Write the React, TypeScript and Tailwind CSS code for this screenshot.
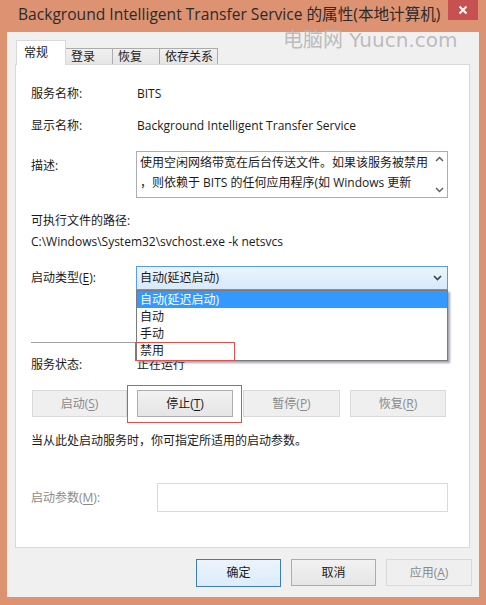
import React from "react";

const F = "font-['Open_Sans','Noto_Sans_CJK_SC',sans-serif]";

function U({ c }: { c: string }) {
  return <span className="underline underline-offset-2">{c}</span>;
}

function Btn({
  children,
  w,
  disabled,
  primary,
}: {
  children: React.ReactNode;
  w: string;
  disabled?: boolean;
  primary?: boolean;
}) {
  const base =
    "h-[27px] flex items-center justify-center text-[12px] border shrink-0 " + w + " ";
  if (disabled)
    return (
      <div className={base + "bg-[#efefef] border-[#d9d9d9] text-[#8a8a8a]"}>{children}</div>
    );
  if (primary)
    return (
      <div className={base + "bg-gradient-to-b from-[#ecf4fc] to-[#dcecfc] border-[#3c7fb1] text-[#1a1a1a]"}>
        {children}
      </div>
    );
  return (
    <div className={base + "bg-gradient-to-b from-[#f2f2f2] to-[#e5e5e5] border-[#acacac] text-[#1a1a1a]"}>
      {children}
    </div>
  );
}

export default function App() {
  return (
    <div className={"relative w-[486px] h-[605px] bg-[#dd9272] flex flex-col overflow-hidden " + F}>
      {/* title bar */}
      <div className="h-[32px] shrink-0 flex items-center pl-[18px] pb-[2px]">
        <span className="text-[15.6px] text-[#2b2b2b] whitespace-nowrap">
          Background Intelligent Transfer Service 的属性(本地计算机)
        </span>
      </div>
      <div className="absolute top-0 right-[8px] w-[30px] h-[20px] bg-[#c75050] flex items-center justify-center">
        <svg width="10" height="10" viewBox="0 0 10 10">
          <path d="M1.5 1.5 L8.5 8.5 M8.5 1.5 L1.5 8.5" stroke="#fff" strokeWidth="2" />
        </svg>
      </div>

      {/* body */}
      <div className="mx-[7px] mb-[8px] flex-1 bg-[#f0f0f0] flex flex-col">
        {/* tabs */}
        <div className="h-[32px] pl-[9px] pt-[8px] flex items-end text-[12px] text-[#1a1a1a]">
          <div className="w-[50px] h-[25px] -mb-px relative z-10 bg-white border-t border-l border-r border-[#d9d9d9] pl-[7px] pt-[3px]">
            常规
          </div>
          <div className="w-[47px] h-[16px] bg-gradient-to-b from-[#f0f0f0] to-[#e5e5e5] border-t border-r border-[#acacac] pl-[5px] leading-[16px]">
            登录
          </div>
          <div className="w-[47px] h-[16px] bg-gradient-to-b from-[#f0f0f0] to-[#e5e5e5] border-t border-r border-[#acacac] pl-[5px] leading-[16px]">
            恢复
          </div>
          <div className="w-[58px] h-[16px] bg-gradient-to-b from-[#f0f0f0] to-[#e5e5e5] border-t border-r border-[#acacac] pl-[5px] leading-[16px]">
            依存关系
          </div>
        </div>

        {/* panel */}
        <div className="ml-[8px] mr-[9px] h-[484px] bg-white border border-[#d9d9d9] pl-[15px] pr-[21px] text-[12px] text-[#1a1a1a] flex flex-col">
          <div className="mt-[21px] h-[16px] flex items-center">
            <div className="w-[106px]">服务名称:</div>
            <div>BITS</div>
          </div>
          <div className="mt-[16px] h-[16px] flex items-center">
            <div className="w-[106px]">显示名称:</div>
            <div>Background Intelligent Transfer Service</div>
          </div>
          <div className="mt-[17px] h-[47px] flex">
            <div className="w-[105px] pt-[6px]">描述:</div>
            <div className="flex-1 border border-[#abadb3] flex">
              <div className="flex-1 pl-[3px] pt-[1px] leading-[20px] whitespace-nowrap overflow-hidden">
                <div>使用空闲网络带宽在后台传送文件。如果该服务被禁用</div>
                <div>，则依赖于 BITS 的任何应用程序(如 Windows 更新</div>
              </div>
              <div className="w-[16px] flex flex-col justify-between items-center py-[4px]">
                <svg width="9" height="6" viewBox="0 0 9 6">
                  <path d="M1 5 L4.5 1.5 L8 5" stroke="#606060" strokeWidth="1.5" fill="none" />
                </svg>
                <svg width="9" height="6" viewBox="0 0 9 6">
                  <path d="M1 1 L4.5 4.5 L8 1" stroke="#606060" strokeWidth="1.5" fill="none" />
                </svg>
              </div>
            </div>
          </div>
          <div className="mt-[15px] h-[16px] flex items-center">可执行文件的路径:</div>
          <div className="mt-[5px] h-[16px] flex items-center">
            C:\Windows\System32\svchost.exe -k netsvcs
          </div>
          <div className="mt-[16px] h-[24px] flex items-center">
            <div className="w-[105px]">
              启动类型(<U c="E" />):
            </div>
            <div className="flex-1 h-[24px] border border-[#569de5] bg-gradient-to-b from-[#ebf4fd] to-[#d7e9fb] flex items-center pl-[3px] pr-[5px]">
              <div className="flex-1">自动(延迟启动)</div>
              <svg width="9" height="6" viewBox="0 0 9 6">
                <path d="M1 1 L4.5 4.5 L8 1" stroke="#404040" strokeWidth="1.6" fill="none" />
              </svg>
            </div>
          </div>
          <div className="mt-[52px] h-px bg-[#a0a0a0]" />
          <div className="mt-[14px] h-[16px] flex items-center">
            <div className="w-[106px]">服务状态:</div>
            <div>正在运行</div>
          </div>
          <div className="mt-[17px] flex gap-[10px] pl-px">
            <Btn w="w-[95px]" disabled>
              启动(<U c="S" />)
            </Btn>
            <Btn w="w-[96px]">
              停止(<U c="T" />)
            </Btn>
            <Btn w="w-[97px]" disabled>
              暂停(<U c="P" />)
            </Btn>
            <Btn w="w-[96px]" disabled>
              恢复(<U c="R" />)
            </Btn>
          </div>
          <div className="mt-[16px] h-[16px] flex items-center">
            当从此处启动服务时，你可指定所适用的启动参数。
          </div>
          <div className="mt-[34px] h-[29px] flex items-center">
            <div className="w-[126px] text-[#8a8a8a]">
              启动参数(<U c="M" />):
            </div>
            <div className="flex-1 h-[29px] border border-[#d9d9d9] bg-white" />
          </div>
        </div>

        {/* bottom buttons */}
        <div className="mt-[11px] flex justify-end gap-[10px] pr-[7px]">
          <Btn w="w-[85px] h-[28px]" primary>
            确定
          </Btn>
          <Btn w="w-[85px]">取消</Btn>
          <Btn w="w-[86px]" disabled>
            应用(<U c="A" />)
          </Btn>
        </div>
      </div>

      {/* watermark */}
      <div className="absolute left-[283px] top-[25px] text-[20px] text-[#b5b5b5]/90 whitespace-nowrap font-['DejaVu_Sans','Noto_Sans_CJK_SC',sans-serif]">
        电脑网 Yuucn.com
      </div>

      {/* dropdown list */}
      <div className="absolute left-[136px] top-[290px] w-[312px] h-[71px] bg-white border border-[#7a7a7a] shadow-[2px_2px_2px_rgba(80,90,110,0.55)] text-[12px] text-[#1a1a1a]">
        <div className="h-[17px] bg-[#3399ff] text-white pl-[3px] flex items-center">自动(延迟启动)</div>
        <div className="h-[17px] pl-[3px] flex items-center">自动</div>
        <div className="h-[17px] pl-[3px] flex items-center">手动</div>
        <div className="h-[17px] pl-[3px] flex items-center">禁用</div>
      </div>

      {/* red highlight boxes */}
      <div className="absolute left-[135px] top-[342px] w-[100px] h-[19px] border border-[#d9534f]" />
      <div className="absolute left-[127px] top-[385px] w-[115px] h-[38px] border border-[#d9534f]" />
    </div>
  );
}
